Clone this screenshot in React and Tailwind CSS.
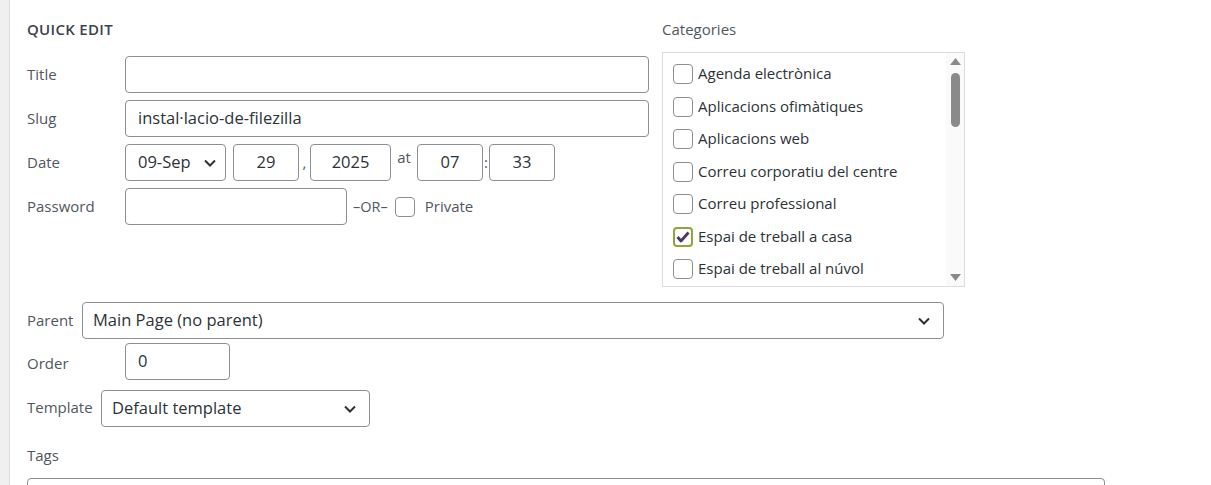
import { useState } from 'react';

const categories = [
  ['Agenda electrònica', false],
  ['Aplicacions ofimàtiques', false],
  ['Aplicacions web', false],
  ['Correu corporatiu del centre', false],
  ['Correu professional', false],
  ['Espai de treball a casa', true],
  ['Espai de treball al núvol', false],
];

function Chevron() {
  return (
    <svg width="14" height="10" viewBox="0 0 14 10" className="shrink-0">
      <path d="M2 2.5 L7 7.5 L12 2.5" fill="none" stroke="#2c3338" strokeWidth="2" />
    </svg>
  );
}

function Box({ checked, className = '' }) {
  return (
    <span
      className={
        checked
          ? `flex h-5 w-5 shrink-0 items-center justify-center rounded-[4px] border-2 border-[#8ea73b] bg-white ${className}`
          : `h-5 w-5 shrink-0 rounded-[4px] border border-[#8c8f94] bg-white ${className}`
      }
    >
      {checked && (
        <svg width="14" height="12" viewBox="0 0 14 12">
          <path d="M1.5 6 L5 10 L12.5 1.5" fill="none" stroke="#4a3766" strokeWidth="2.8" strokeLinejoin="round" />
        </svg>
      )}
    </span>
  );
}

function Field({ className = '', children, center }) {
  return (
    <div
      className={`flex h-[37px] shrink-0 items-center rounded-[4px] border border-[#8c8f94] bg-white text-[16.5px] text-[#2c3338] ${center ? 'justify-center' : 'px-3'} ${className}`}
    >
      {children}
    </div>
  );
}

export default function App() {
  const [cats] = useState(categories);

  return (
    <div className="flex h-[485px] w-[1211px] overflow-hidden bg-white font-['Open_Sans',sans-serif] text-[15px] text-[#50575e]">
      <div className="w-[10px] shrink-0 border-r border-[#dcdcde] bg-[#f0f0f1]" />
      <div className="flex flex-1 flex-col">
        <div className="h-[3px] bg-[#f3f4f4]" />
        <div className="flex flex-col pl-[17px] pt-[19px]">
          <div className="flex">
            {/* left column: basic fields */}
            <div className="w-[636px] shrink-0">
              <div className="h-[20px] text-[15px] font-semibold leading-[20px] tracking-[0.3px] text-[#3c434a]">QUICK EDIT</div>
              <div className="mt-[17px] flex flex-col gap-[7px]">
                <div className="flex items-center">
                  <span className="w-[98px]">Title</span>
                  <Field className="w-[524px]" />
                </div>
                <div className="flex items-center">
                  <span className="w-[98px]">Slug</span>
                  <Field className="w-[524px]">instal·lacio-de-filezilla</Field>
                </div>
                <div className="flex items-center">
                  <span className="w-[98px]">Date</span>
                  <Field className="w-[101px] justify-between pr-2">
                    <span>09-Sep</span>
                    <Chevron />
                  </Field>
                  <Field center className="ml-[7px] w-[66px]">29</Field>
                  <span className="w-[11px] text-center">,</span>
                  <Field center className="w-[81px]">2025</Field>
                  <span className="w-[26px] self-start text-center leading-[26px]">at</span>
                  <Field center className="w-[66px]">07</Field>
                  <span className="w-[6px] text-center">:</span>
                  <Field center className="w-[66px]">33</Field>
                </div>
                <div className="flex items-center">
                  <span className="w-[98px]">Password</span>
                  <Field className="w-[222px]" />
                  <span className="ml-[6px] text-[14.5px]">–OR–</span>
                  <Box className="ml-[7px]" />
                  <span className="ml-[10px]">Private</span>
                </div>
              </div>
            </div>

            {/* right column: categories */}
            <div className="ml-[-1px]">
              <div className="h-[20px] leading-[20px]">Categories</div>
              <div className="mt-[13px] flex h-[235px] w-[303px] overflow-hidden border border-[#dcdcde] bg-white">
                <ul className="flex flex-1 flex-col pl-[10px] pt-[10px] text-[#2c3338]">
                  {cats.map(([name, checked]) => (
                    <li key={name} className="flex h-[32.5px] shrink-0 items-start">
                      <Box checked={checked} className="mt-[1px]" />
                      <span className="ml-[5px] leading-[21px]">{name}</span>
                    </li>
                  ))}
                </ul>
                <div className="flex w-[18px] flex-col items-center bg-[#fafafa] py-[4px]">
                  <svg width="13" height="9" viewBox="0 0 13 9">
                    <path d="M6.5 1 L12 8 L1 8 Z" fill="#8a8a8a" />
                  </svg>
                  <div className="mt-[7px] h-[54px] w-[9px] rounded-full bg-[#8a8a8a]" />
                  <div className="flex-1" />
                  <svg width="13" height="9" viewBox="0 0 13 9">
                    <path d="M1 1 L12 1 L6.5 8 Z" fill="#8a8a8a" />
                  </svg>
                </div>
              </div>
            </div>
          </div>

          {/* hierarchy and template */}
          <div className="mt-[15px] flex flex-col">
            <div className="flex items-center">
              <span className="w-[55px] self-start leading-[36px]">Parent</span>
              <Field className="w-[862px] justify-between pl-[10px] pr-[12px]">
                <span>Main Page (no parent)</span>
                <Chevron />
              </Field>
            </div>
            <div className="mt-[4px] flex items-center">
              <span className="w-[98px] pt-[4px]">Order</span>
              <Field className="w-[105px]">0</Field>
            </div>
            <div className="mt-[10px] flex items-center">
              <span className="w-[74px] self-start leading-[34px]">Template</span>
              <Field className="w-[269px] justify-between pl-[10px] pr-[12px]">
                <span>Default template</span>
                <Chevron />
              </Field>
            </div>
            <div className="mt-[18px] leading-[20px]">Tags</div>
            <div className="mt-[13px] h-[40px] w-[1078px] shrink-0 rounded-[4px] border border-[#8c8f94]" />
          </div>
        </div>
      </div>
    </div>
  );
}
